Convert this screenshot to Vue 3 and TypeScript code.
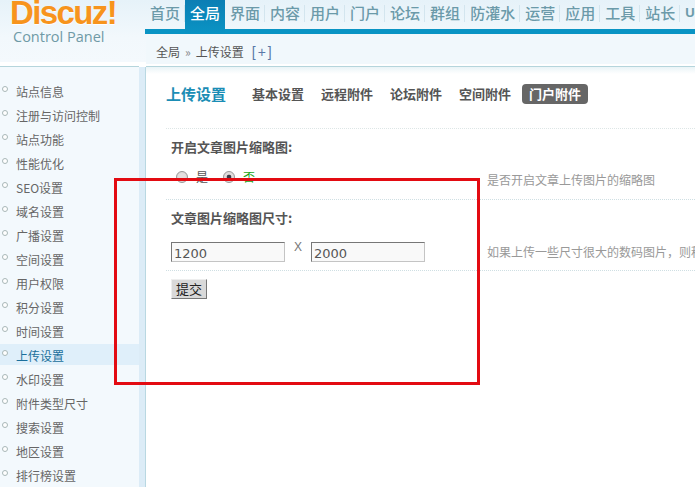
<script setup lang="ts">
const navItems: string[] = ['首页', '全局', '界面', '内容', '用户', '门户', '论坛', '群组', '防灌水', '运营', '应用', '工具', '站长', 'UCenter']
const sideItems: string[] = ['站点信息', '注册与访问控制', '站点功能', '性能优化', 'SEO设置', '域名设置', '广播设置', '空间设置', '用户权限', '积分设置', '时间设置', '上传设置', '水印设置', '附件类型尺寸', '搜索设置', '地区设置', '排行榜设置']
const tabs: string[] = ['基本设置', '远程附件', '论坛附件', '空间附件', '门户附件']
</script>

<template>
  <div class="page">
    <header class="top">
      <div class="logo">
        <div class="brand">Discuz!</div>
        <div class="sub">Control Panel</div>
      </div>
      <nav class="nav">
        <a v-for="n in navItems" :key="n" class="nav-item" :class="{ on: n === '全局', latin: n === 'UCenter' }">{{ n }}</a>
      </nav>
    </header>
    <div class="body">
      <aside class="side">
        <ul class="menu">
          <li v-for="s in sideItems" :key="s" class="menu-item" :class="{ on: s === '上传设置' }">
            <i class="dot"></i><span>{{ s }}</span>
          </li>
        </ul>
      </aside>
      <main class="main">
        <div class="crumb">全局<em>»</em>上传设置<b>[+]</b></div>
        <div class="rule"></div>
        <div class="content">
          <div class="title-row">
            <h3>上传设置</h3>
            <div class="tabs">
              <span v-for="t in tabs" :key="t" class="tab" :class="{ on: t === '门户附件' }">{{ t }}</span>
            </div>
          </div>
          <form class="form" @submit.prevent>
            <div class="label">开启文章图片缩略图:</div>
            <div class="row">
              <div class="field radios">
                <input class="radio" type="radio" name="thumb" />
                <span class="r-text">是</span>
                <input class="radio second" type="radio" name="thumb" checked />
                <span class="r-text green">否</span>
              </div>
              <div class="help">是否开启文章上传图片的缩略图</div>
            </div>
            <div class="label">文章图片缩略图尺寸:</div>
            <div class="row">
              <div class="field sizes">
                <input class="txt" type="text" value="1200" />
                <span class="x">X</span>
                <input class="txt" type="text" value="2000" />
              </div>
              <div class="help">如果上传一些尺寸很大的数码图片，则程序将按照这里设置的尺寸进行缩略</div>
            </div>
            <button class="submit" type="button">提交</button>
          </form>
        </div>
      </main>
    </div>
    <div class="mark"></div>
  </div>
</template>

<style>
html, body { margin: 0; padding: 0; background: #fff; }
</style>

<style scoped>
.page {
  position: relative;
  width: 695px;
  height: 487px;
  overflow: hidden;
  background: #fff;
  font-family: "Noto Sans CJK SC", "Liberation Sans", sans-serif;
  color: #555;
}
.top {
  display: flex;
  height: 62px;
  background: linear-gradient(#e6f2f9, #f2f8fc 60%, #f4f9fd);
}
.logo { width: 145px; flex: none; overflow: hidden; }
.brand {
  margin: -4px 0 0 10px;
  font: bold 33px/33px "Liberation Sans", sans-serif;
  letter-spacing: -1.6px;
  color: #f7941d;
  text-shadow: 0 1px 1px #fff;
}
.sub {
  margin: 0 0 0 13px;
  font: 14.5px/16px "Open Sans", sans-serif;
  color: #6f9aa6;
}
.nav {
  display: flex;
  height: 34px;
  flex: 1;
  white-space: nowrap;
  position: relative;
}
.nav::after {
  content: "";
  position: absolute;
  left: 0;
  right: 0;
  top: 29px;
  height: 5px;
  background: #0a94c4;
}
.nav-item {
  position: relative;
  z-index: 1;
  padding: 0 5px;
  height: 29px;
  line-height: 26px;
  font-size: 15px;
  font-weight: 500;
  color: #6b9aa9;
  flex: none;
}
.nav-item:not(.on)::after {
  content: "";
  position: absolute;
  right: 0;
  top: 5px;
  height: 17px;
  border-right: 1px solid #d3e5ee;
}
.nav-item.latin { font: bold 13px/26px "Liberation Sans", sans-serif; }
.nav-item.on {
  height: 34px;
  color: #fff;
  background: linear-gradient(#0b7eb4, #0a94c4);
}
.body {
  position: absolute;
  left: 0;
  right: 0;
  top: 34px;
  bottom: 0;
  display: flex;
}
.side {
  width: 146px;
  flex: none;
  background:
    linear-gradient(#b9d8e2, #b9d8e2) 145px 33px / 1px 100% no-repeat,
    linear-gradient(#dcecf7, #dcecf7) 139px 33px / 6px 100% no-repeat,
    linear-gradient(transparent 28px, #fff 28px, #fff 32px, #b5d5dc 32px, #b5d5dc 33px, #f3f9fd 33px) 0 0 / 139px 100% no-repeat;
}
.menu {
  list-style: none;
  margin: 0;
  padding: 46px 7px 0 0;
}
.menu-item {
  display: flex;
  align-items: flex-start;
  height: 21px;
  margin-bottom: 3px;
  font-size: 12px;
  color: #666;
  line-height: 24px;
}
.menu-item.on { background: #dfeffa; color: #1b6f9c; }
.dot {
  width: 6px;
  height: 6px;
  margin: 6px 8px 0 2px;
  box-sizing: border-box;
  border-radius: 50%;
  border: 1px solid #a9b8b8;
  background: #fff;
  flex: none;
}
.main {
  flex: 1;
  min-width: 0;
  display: flex;
  flex-direction: column;
}
.crumb {
  margin-top: 5px;
  height: 25px;
  line-height: 25px;
  padding-left: 10px;
  background: #f1f8fc;
  font-size: 12px;
  color: #555;
  white-space: nowrap;
}
.crumb em { font-style: normal; color: #888; margin: 0 5px; font-size: 12px; }
.crumb b { font: 14px "Liberation Sans", sans-serif; color: #5a78a8; margin-left: 8px; letter-spacing: 2px; font-weight: 400; }
.rule {
  margin-top: 2px;
  height: 7px;
  border-top: 1px solid #b5d5dc;
  background: linear-gradient(#eaf4f7, #fff);
}
.content { padding-left: 20px; }
.title-row {
  display: flex;
  align-items: center;
  height: 55px;
  padding-bottom: 15px;
  border-bottom: 1px dotted #dde6e6;
  box-sizing: border-box;
}
h3 {
  margin: 0;
  width: 81px;
  font-size: 15px;
  font-weight: 700;
  color: #1b8db5;
  flex: none;
}
.tabs { display: flex; white-space: nowrap; align-items: center; }
.tab {
  font-size: 13px;
  font-weight: 700;
  line-height: 20px;
  color: #555;
  padding: 0 5px;
  margin-right: 7px;
  border-radius: 4px;
}
.tab.on { background: #666; color: #fff; padding: 0 7px; margin-left: -1px; }
.label {
  padding: 8px 0 0 5px;
  height: 25px;
  font-size: 13px;
  font-weight: 700;
  line-height: 20px;
  color: #555;
}
.row {
  display: flex;
  align-items: center;
  height: 37px;
  border-bottom: 1px dotted #cfdfe3;
  box-sizing: content-box;
  padding-left: 5px;
}
.field { width: 316px; box-sizing: border-box; flex: none; display: flex; align-items: center; }
.help { font-size: 12px; color: #999; white-space: nowrap; }
.radios { padding-left: 5px; height: 26px; margin-top: -8px; }
.radio {
  appearance: none;
  width: 12px;
  height: 12px;
  margin: 0;
  border-radius: 50%;
  border: 1px solid #999;
  background: radial-gradient(circle, #e4e0e0 0 45%, #d3cccc 100%);
  box-sizing: border-box;
}
.radio:checked { background: radial-gradient(circle, #3b3b48 0 28%, #e0dcdc 38% 100%); }
.radio.second { margin-left: 15px; }
.r-text { margin-left: 8px; font-size: 12px; color: #555; }
.green { color: #19a519; }
.sizes { margin-top: 1px; }
.row:has(.radios) .help { margin-top: -2px; }
.txt {
  width: 114px;
  height: 20px;
  box-sizing: border-box;
  border: 1px solid;
  border-color: #777 #c4c4c4 #c4c4c4 #777;
  background: #f9f9f9;
  padding: 2px 2px 0;
  font: 13px "DejaVu Sans", sans-serif;
  color: #555;
  outline: none;
}
.x { width: 26px; text-align: center; font: 12px "Liberation Sans", sans-serif; color: #777; margin-top: -10px; }
.submit {
  display: block;
  margin: 8px 0 0 5px;
  width: 36px;
  height: 20px;
  padding: 0;
  box-sizing: border-box;
  border: 1px solid;
  border-color: #eee #777 #777 #eee;
  background: #d9d9d9;
  font: 13px "Noto Sans CJK SC", sans-serif;
  line-height: 18px;
  color: #222;
}
.mark {
  position: absolute;
  left: 114px;
  top: 178px;
  width: 366px;
  height: 207px;
  box-sizing: border-box;
  border: 3px solid #e30b12;
  pointer-events: none;
}
</style>
